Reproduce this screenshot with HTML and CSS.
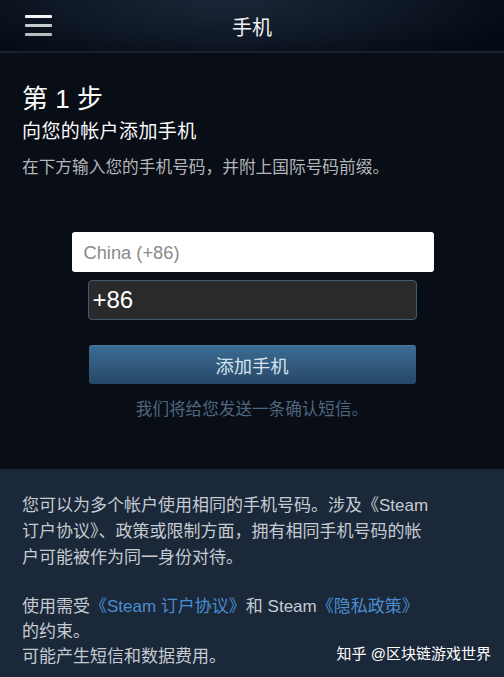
FILE: index.html
```html
<!DOCTYPE html>
<html lang="zh">
<head>
<meta charset="utf-8">
<link rel="stylesheet" href="styles.css">
</head>
<body>
<header class="topbar">
  <div class="menu">
    <span class="bar b1"></span>
    <span class="bar b2"></span>
    <span class="bar b3"></span>
  </div>
  <div class="title">手机</div>
</header>
<main class="main">
  <h1 class="step">第 1 步</h1>
  <h2 class="sub">向您的帐户添加手机</h2>
  <p class="desc">在下方输入您的手机号码，并附上国际号码前缀。</p>
  <div class="form">
    <div class="country">China (+86)</div>
    <div class="phone">+86</div>
    <div class="btn">添加手机</div>
    <p class="note">我们将给您发送一条确认短信。</p>
  </div>
</main>
<section class="footer">
  <p class="para">您可以为多个帐户使用相同的手机号码。涉及《Steam<br>订户协议》、政策或限制方面，拥有相同手机号码的帐<br>户可能被作为同一身份对待。</p>
  <p class="para p2">使用需受<span class="link">《Steam 订户协议》</span>和 Steam<span class="link">《隐私政策》</span><br>的约束。<br>可能产生短信和数据费用。</p>
  <div class="watermark">知乎 @区块链游戏世界</div>
</section>
</body>
</html>
```
FILE: styles.css
```css
* { box-sizing: border-box; }
html, body {
  margin: 0;
  padding: 0;
  height: 677px;
  overflow: hidden;
}
body {
  background: #090d15;
  font-family: "Liberation Sans", "Noto Sans CJK SC", sans-serif;
  width: 504px;
}
.topbar {
  height: 53px;
  position: relative;
  background: radial-gradient(ellipse 60% 140% at 45% 0%, #1a2638 0%, #0f1826 55%, #050b14 100%);
  border-bottom: 2px solid #1a212c;
  display: flex;
  align-items: center;
  justify-content: center;
}
.menu {
  position: absolute;
  left: 25px;
  top: 15px;
  width: 27px;
  display: flex;
  flex-direction: column;
  gap: 6px;
}
.bar {
  display: block;
  height: 3px;
  border-radius: 1px;
}
.b1 { background: #f2f4f6; }
.b2 { background: #c8cbce; }
.b3 { background: #b9bcbf; }
.title {
  color: #f2f2f2;
  font-size: 20px;
  margin-top: 2px;
}
.main {
  padding: 29px 22px 0;
  height: 416px;
}
.step {
  margin: 0;
  font-weight: normal;
  color: #fafafa;
  font-size: 26px;
  line-height: 34px;
}
.sub {
  margin: 3px 0 0;
  font-weight: normal;
  color: #fafafa;
  font-size: 19px;
  letter-spacing: 0.4px;
  line-height: 26px;
}
.desc {
  margin: 12px 0 0;
  color: #b3b6ba;
  font-size: 16.7px;
  line-height: 22px;
}
.form {
  display: flex;
  flex-direction: column;
  align-items: center;
  margin-top: 53px;
}
.country {
  width: 362px;
  height: 40px;
  margin-left: 1px;
  background: #fff;
  border-radius: 3px;
  color: #8a8a8a;
  font-size: 18.3px;
  line-height: 42px;
  padding-left: 12px;
}
.phone {
  width: 329px;
  height: 40px;
  margin-top: 8px;
  background: #2a2a2a;
  border: 1px solid #3f5a75;
  border-radius: 4px;
  color: #fff;
  font-size: 24px;
  line-height: 38px;
  padding-left: 4px;
}
.btn {
  width: 327px;
  height: 39px;
  margin-top: 25px;
  border-radius: 3px;
  background: linear-gradient(#3c6c93, #264867);
  border-top: 1px solid #4d7ca3;
  color: #d6e3ef;
  font-size: 18.3px;
  display: flex;
  align-items: center;
  justify-content: center;
}
.note {
  margin: 15px 0 0;
  color: #4e6780;
  font-size: 16.6px;
  line-height: 22px;
}
.footer {
  background: #1b2839;
  height: 208px;
  padding: 24px 22px 0;
  position: relative;
}
.para {
  margin: 0;
  color: #c5cbd1;
  font-size: 17px;
  line-height: 26px;
}
.p2 { margin-top: 23px; line-height: 25px; }
.link { color: #4a8ed1; }
.watermark {
  position: absolute;
  right: 13px;
  bottom: 14px;
  color: #fff;
  font-size: 15px;
}
```
